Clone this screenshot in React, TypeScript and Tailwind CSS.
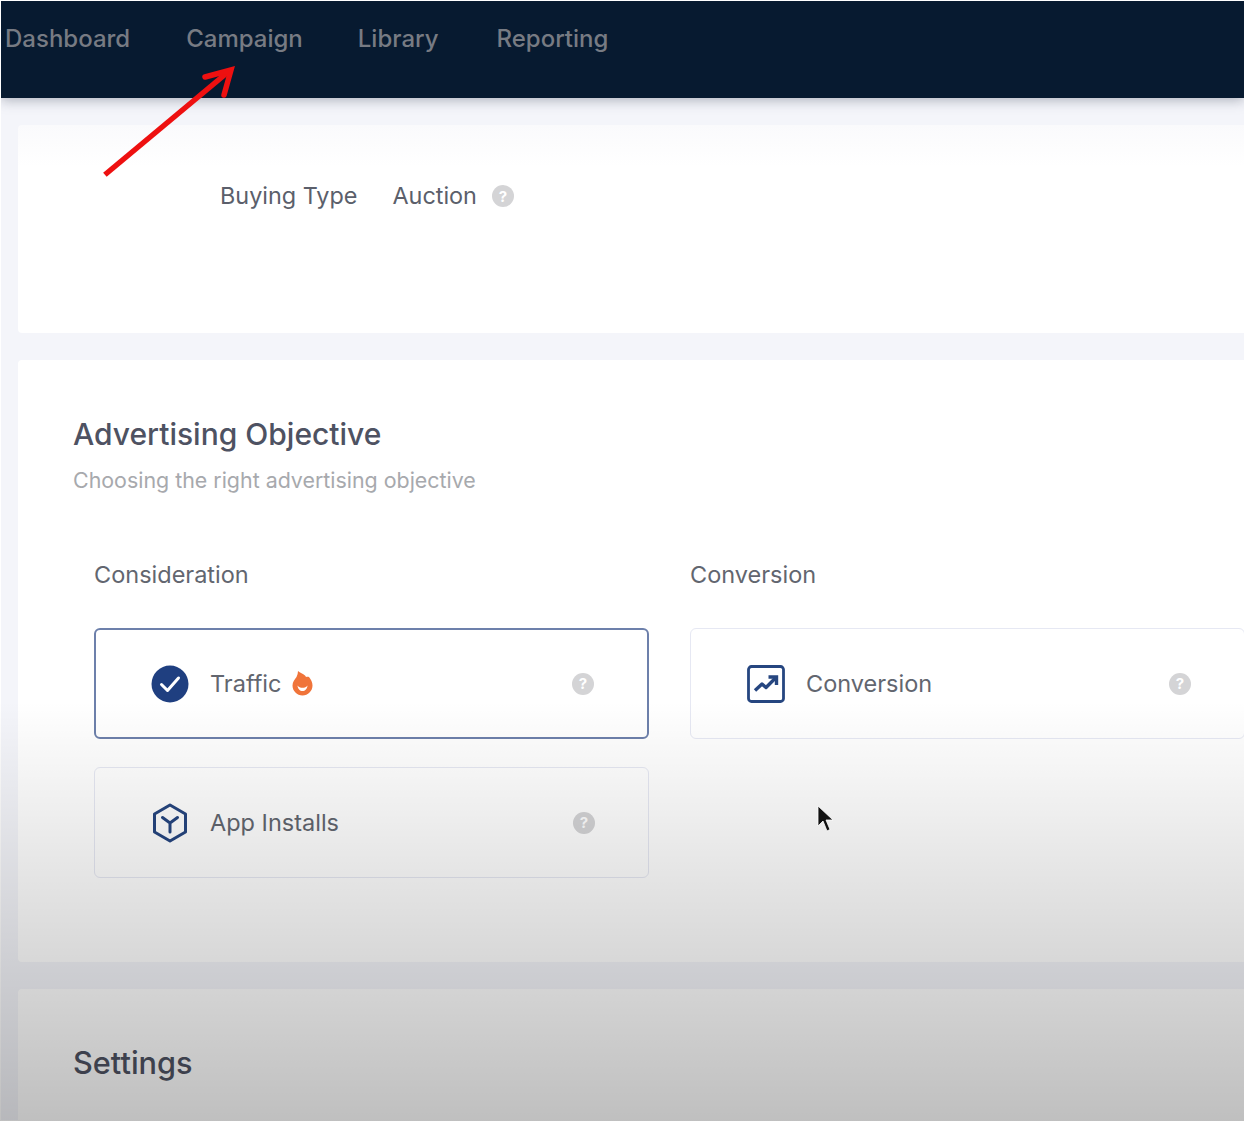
import React from 'react';

const Help = () => (
  <span className="flex h-[22px] w-[22px] shrink-0 items-center justify-center rounded-full bg-[#d4d4d6] text-[15px] font-bold leading-none text-white">
    ?
  </span>
);

const CheckIcon = () => (
  <svg width="38" height="38" viewBox="0 0 38 38" aria-hidden="true">
    <circle cx="19" cy="19" r="18.5" fill="#1f3f80" />
    <path d="M10.5 19.5l6 6L27.5 13" fill="none" stroke="#fff" strokeWidth="3" strokeLinecap="round" strokeLinejoin="round" />
  </svg>
);

const FlameIcon = () => (
  <svg width="21" height="25" viewBox="0 0 21 25" aria-hidden="true">
    <path d="M6 0c2 2 5 2.500 7 4.500.5.500.8 1 1 1.500 1-.3 2-.3 3 0 2 2.500 3.500 5.500 3.500 8.500 0 5.500-4.500 10-10 10S.5 20 .5 14.500C.5 11 2.500 8.500 4.500 6 5.500 4 6 2 6 0z" fill="#f0743a" />
    <path d="M5.500 14.500c1 1.500 3 2.300 5 2.300s4-.8 5-2.300c-.3 3.500-2.500 5.500-5 5.500s-4.700-2-5-5.500z" fill="#fff" />
  </svg>
);

const HexIcon = () => (
  <svg width="36" height="40" viewBox="0 0 36 40" fill="none" stroke="#264680" strokeWidth="3" strokeLinejoin="round" strokeLinecap="round" aria-hidden="true">
    <path d="M18 2l15.500 9v18L18 38 2.500 29V11z" />
    <path d="M10.500 14.500L18 20l7.500-5.500M18 20v9" />
  </svg>
);

const TrendIcon = () => (
  <svg width="38" height="38" viewBox="0 0 38 38" fill="none" stroke="#264680" aria-hidden="true">
    <rect x="1.500" y="1.500" width="35" height="35" rx="3" strokeWidth="2.800" />
    <path d="M8 25.500l7-6.500 4 3.500L29 12.500" strokeWidth="3.400" strokeLinejoin="round" />
    <path d="M21.500 12H29.500V20" strokeWidth="3.400" />
  </svg>
);

const Arrow = () => (
  <svg className="absolute left-[100px] top-[64px]" width="140" height="116" viewBox="100 64 140 116" aria-hidden="true">
    <path d="M107 173L228 72" stroke="#ee1010" strokeWidth="5.500" strokeLinecap="square" fill="none" />
    <path d="M205 77L231 70L224 95" stroke="#ee1010" strokeWidth="5.500" strokeLinecap="round" strokeLinejoin="miter" fill="none" />
  </svg>
);

const Cursor = () => (
  <svg className="absolute left-[816px] top-[804px]" width="20" height="32" viewBox="0 0 20 32" aria-hidden="true">
    <path d="M2 2v20l5-5 4 10 3-1.500-4-9.500h7z" fill="#111" stroke="#fff" strokeWidth="0.800" />
  </svg>
);

const Option = ({
  icon,
  label,
  selected = false,
}: {
  icon: React.ReactNode;
  label: React.ReactNode;
  selected?: boolean;
}) => (
  <div
    className={`flex h-[111px] w-[555px] items-center rounded-[6px] bg-white pr-[53px] ${
      selected ? 'border-2 border-[#6d80ab] pl-[55px]' : 'border border-[#e6e8f3] pl-[56px]'
    }`}
  >
    <div className="flex w-[38px] justify-center">{icon}</div>
    <div className="ml-[21px] flex flex-1 items-center gap-[11px] text-[23.5px] text-[#62666f]">{label}</div>
    <Help />
  </div>
);

export default function App() {
  return (
    <div className="relative h-[1121px] w-[1244px] overflow-hidden bg-white pb-px pl-px pt-px font-['Inter',sans-serif]">
      <div className="h-[1119px] overflow-hidden bg-[#f4f5fa]">
        <nav className="flex h-[97px] items-start gap-[55px] bg-[#071a30] pl-1 pt-[20px] text-[24px] font-medium leading-[36px] text-[#777b83] shadow-[0_2px_12px_rgba(60,70,90,0.4)]">
          <a>Dashboard</a>
          <a className="ml-[1px]">Campaign</a>
          <a>Library</a>
          <a className="ml-[3px]">Reporting</a>
        </nav>

        <main className="flex flex-col gap-[27px] pl-[17px] pt-[27px]">
          <section className="flex h-[208px] items-start gap-[35px] rounded-l-[4px] bg-gradient-to-b from-[#fafafc] to-white to-[20%] pl-[202px] pt-[56px] text-[23.4px] leading-[30px] text-[#5b5f6b]">
            <span>Buying Type</span>
            <span className="flex items-center gap-[15px]">
              Auction <Help />
            </span>
          </section>

          <section className="h-[602px] rounded-l-[4px] bg-white pl-[55px] pt-[54px]">
            <h2 className="text-[30px] font-medium leading-[40px] text-[#4e5262]">Advertising Objective</h2>
            <p className="mt-[12px] text-[21.4px] leading-[28px] text-[#a7a9ad]">Choosing the right advertising objective</p>
            <div className="mt-[66px] flex gap-[41px] pl-[21px]">
              <div className="flex flex-col">
                <h3 className="text-[23.5px] leading-[30px] text-[#62666f]">Consideration</h3>
                <div className="mt-[38px] flex flex-col gap-[28px]">
                  <Option selected icon={<CheckIcon />} label={<>Traffic <FlameIcon /></>} />
                  <Option icon={<HexIcon />} label="App Installs" />
                </div>
              </div>
              <div className="flex flex-col">
                <h3 className="text-[23.5px] leading-[30px] text-[#62666f]">Conversion</h3>
                <div className="mt-[38px]">
                  <Option icon={<TrendIcon />} label="Conversion" />
                </div>
              </div>
            </div>
          </section>

          <section className="h-[200px] rounded-l-[4px] bg-white pl-[55px] pt-[54px]">
            <h2 className="text-[30.7px] font-medium leading-[40px] text-[#4e5262]">Settings</h2>
          </section>
        </main>
      </div>

      {/* video fade over the lower half */}
      <div className="pointer-events-none absolute inset-x-0 bottom-0 h-[420px] bg-gradient-to-b from-transparent to-black/25" />
      <Arrow />
      <Cursor />
    </div>
  );
}
